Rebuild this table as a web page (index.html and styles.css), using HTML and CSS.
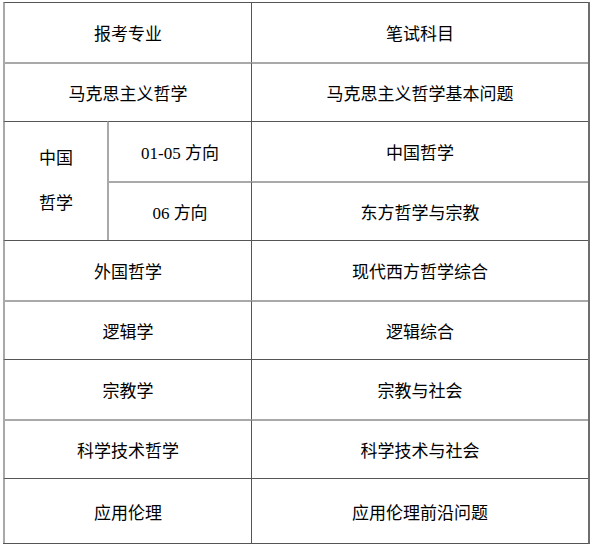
FILE: index.html
```html
<!DOCTYPE html>
<html lang="zh">
<head>
<meta charset="utf-8">
<title>报考专业与笔试科目</title>
<link rel="stylesheet" href="styles.css">
</head>
<body>
<div class="grid">
  <div class="cell span2 dark">报考专业</div>
  <div class="cell c3 dark">笔试科目</div>

  <div class="cell span2 light">马克思主义哲学</div>
  <div class="cell c3 light">马克思主义哲学基本问题</div>

  <div class="cell c1 rows2 dark"><span class="stack">中国<br>哲学</span></div>
  <div class="cell c2 dark">01-05 方向</div>
  <div class="cell c3 dark">中国哲学</div>

  <div class="cell c2 light">06 方向</div>
  <div class="cell c3 light">东方哲学与宗教</div>

  <div class="cell span2 dark">外国哲学</div>
  <div class="cell c3 dark">现代西方哲学综合</div>

  <div class="cell span2 light">逻辑学</div>
  <div class="cell c3 light">逻辑综合</div>

  <div class="cell span2 dark">宗教学</div>
  <div class="cell c3 dark">宗教与社会</div>

  <div class="cell span2 light">科学技术哲学</div>
  <div class="cell c3 light">科学技术与社会</div>

  <div class="cell span2 dark">应用伦理</div>
  <div class="cell c3 dark">应用伦理前沿问题</div>
</div>
</body>
</html>
```

FILE: styles.css
```css
html, body {
  margin: 0;
  padding: 0;
  background: #ffffff;
}

body {
  padding: 2px 0 0 3px;
  font-family: "Liberation Serif", "Noto Sans CJK SC", serif;
  font-size: 17px;
  color: #000000;
}

.grid {
  display: grid;
  grid-template-columns: 104px 144px 337px;
  grid-template-rows: 60px 59px 60px 59px 60px 59px 60px 59px 65px;
  width: 585px;
  border-right: 2px solid #6e6e6e;
  border-bottom: 1px solid #555555;
}

.cell {
  box-sizing: border-box;
  display: flex;
  align-items: center;
  justify-content: center;
  text-align: center;
}

.dark {
  border-top: 1px solid #555555;
}

.light {
  border-top: 2px solid #a9a9a9;
}

.span2 {
  grid-column: 1 / span 2;
  border-left: 2px solid #a9a9a9;
}

.c1 {
  grid-column: 1;
  border-left: 2px solid #a9a9a9;
}

.c2 {
  grid-column: 2;
  border-left: 2px solid #a9a9a9;
}

.c3 {
  grid-column: 3;
  border-left: 1px solid #555555;
}

.rows2 {
  grid-row: span 2;
}

.stack {
  line-height: 45px;
}
```
